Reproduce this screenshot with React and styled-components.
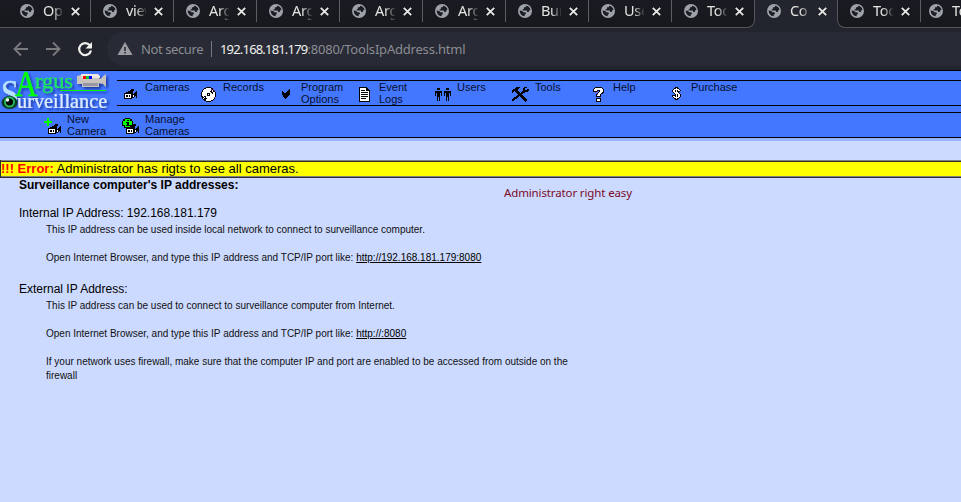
import React from "react";
import styled, { createGlobalStyle } from "styled-components";

const GlobalStyle = createGlobalStyle`
  html, body { margin: 0; background: #ccdaff; }
  body { width: 961px; height: 502px; overflow: hidden; }
`;

const Page = styled.div`
  position: relative;
  width: 961px;
  height: 502px;
  overflow: hidden;
  font-family: "Liberation Sans", Arial, sans-serif;
  color: #000;
`;

/* ---------- browser chrome ---------- */
const TabStrip = styled.div`
  display: flex;
  height: 28px;
  background: #23252e;
`;
const TabGroup = styled.div`
  display: flex;
  box-sizing: border-box;
  flex: ${(p) => (p.$grow ? "1 0 0" : "none")};
  width: ${(p) => (p.$grow ? "auto" : "755px")};
  padding-left: ${(p) => (p.$grow ? 0 : 8)}px;
  overflow: hidden;
  background: linear-gradient(#1a1b22, #17181c);
  border-bottom: 1px solid #54565d;
  border-right: ${(p) => (p.$grow ? "none" : "1px solid #54565d")};
  border-left: ${(p) => (p.$grow ? "1px solid #54565d" : "none")};
  border-radius: ${(p) => (p.$grow ? "0 0 0 8px" : "0 0 8px 0")};
`;
const TabBox = styled.div`
  display: flex;
  align-items: center;
  box-sizing: border-box;
  flex: none;
  width: ${(p) => p.$width || 83}px;
  height: 22px;
  padding-left: ${(p) => p.$inset ?? 12}px;
  border-right: 1px solid ${(p) => (p.$divider ? "#5c5e63" : "transparent")};
`;
const TabTitle = styled.span`
  width: 20px;
  height: 22px;
  margin-left: 9px;
  overflow: hidden;
  white-space: nowrap;
  font: 14.5px/20px "Noto Sans", sans-serif;
  letter-spacing: -0.3px;
  color: #e3e4e0;
  mask-image: linear-gradient(90deg, #000 50%, transparent 105%);
`;
const CloseIcon = styled.svg`
  width: 9px;
  height: 9px;
  margin-left: 8px;
`;
const GlobeSvg = styled.svg`
  width: 14px;
  height: 14px;
  flex: none;
`;
const Toolbar = styled.div`
  display: flex;
  align-items: center;
  height: 42px;
  background: #23252e;
  border-bottom: 1px solid #000;
`;
const NavIcons = styled.svg`
  width: 107px;
  height: 42px;
  flex: none;
`;
const Omnibox = styled.div`
  display: flex;
  align-items: center;
  flex: 1;
  height: 34px;
  padding-left: 10px;
  border-radius: 17px 0 0 17px;
  background: #282a35;
  font: 13px/34px "Noto Sans", sans-serif;
  letter-spacing: -0.2px;
  color: #8b8d93;
  white-space: pre;
`;
const Warn = styled.svg`
  width: 16px;
  height: 16px;
  margin-right: 8px;
`;
const NotSecure = styled.span`
  width: 70px;
  letter-spacing: -0.4px;
`;
const Url = styled.span`
  border-left: 1px solid #777980;
  line-height: 16px;
  padding-left: 8px;
`;
const Host = styled.span`
  color: #f1f2ef;
  letter-spacing: -0.82px;
`;

/* ---------- site header ---------- */
const Header = styled.header`
  height: 67px;
  background: #4477ff;
  border-bottom: 3px solid #99b4ff;
`;
const TopRow = styled.div`
  display: flex;
  height: 41px;
`;
const Logo = styled.svg`
  width: 117px;
  height: 41px;
  flex: none;
`;
const MainMenu = styled.nav`
  display: flex;
  flex: 1;
  box-sizing: border-box;
  height: 26px;
  margin-top: 9px;
  border-top: 1px solid #000;
  border-bottom: 1px solid #000;
`;
const SubMenu = styled.nav`
  display: flex;
  box-sizing: border-box;
  height: 26px;
  padding-left: 39px;
  border-top: 1px solid #000;
  border-bottom: 1px solid #000;
`;
const MenuItem = styled.a`
  display: flex;
  width: 78px;
  flex: none;
`;
const MenuIcon = styled.svg`
  width: 28px;
  height: 24px;
  flex: none;
`;
const MenuLabel = styled.span`
  font-size: 11px;
  line-height: 12px;
  white-space: pre;
  color: #06102e;
`;

/* ---------- body ---------- */
const ErrorBar = styled.div`
  box-sizing: border-box;
  height: 18px;
  margin-top: 19px;
  border-left: 1px solid #303030;
  background: #ff0;
  box-shadow: inset 0 1px #808080, inset 0 2px #2c2c2c, inset 0 -1px #2c2c2c, inset 0 -2px #808080;
  font-size: 13px;
  line-height: 18px;
  white-space: pre;
`;
const ErrorTag = styled.b`
  color: #f00;
`;
const Info = styled.main`
  padding-left: 19px;
  font-size: 12px;
  line-height: 14px;
`;
const Line = styled.div`
  margin-bottom: ${(p) => p.$gap || 0}px;
  font-weight: ${(p) => (p.$bold ? 700 : 400)};
`;
const Detail = styled.p`
  width: 535px;
  margin: 0 0 ${(p) => p.$gap ?? 14}px 27px;
  font-size: 10px;
  line-height: 14px;
  color: #111;
`;
const Link = styled.a`
  text-decoration: underline;
  color: #000;
`;
const Annotation = styled.div`
  position: absolute;
  left: 504px;
  top: 184px;
  font: 11.5px/18px "Noto Sans", sans-serif;
  letter-spacing: -0.13px;
  color: #7d0a28;
  white-space: nowrap;
`;

const Globe = () => (
  <GlobeSvg viewBox="0 0 14 14">
    <circle cx="7" cy="7" r="7" fill="#9da2a8" />
    <path
      d="M8.2 1.700c-.1 1-.7 1.500-1.700 1.500-.7 0-.7.7-.6 1.200.1.6-.7.8-1.300.8v1.300h3.500c.8 0 1 .7 1 1.400h1.200c.6 0 1-.7 1-1.400 0-.6.6-.8 1.200-.7-.2-2-1.800-3.600-4.300-4.100zM1.700 6.500c0 3.200 2.100 5.500 5 5.700v-1.500c1.100-.2 1.300-.9 1.200-1.600-.1-.5-.8-.8-1.400-.8H5.300c-.4-1.100-1.600-1.800-3.600-1.800z"
      fill="#1c1d23"
    />
  </GlobeSvg>
);

const Tab = ({ title, divider, width, inset }) => (
  <TabBox $divider={divider} $width={width} $inset={inset}>
    <Globe />
    <TabTitle>{title}</TabTitle>
    <CloseIcon viewBox="0 0 9 9">
      <path d="M.8.8l7.400 7.400M8.200.8L.8 8.200" stroke="#e8e9e6" strokeWidth="1.800" />
    </CloseIcon>
  </TabBox>
);

/* Bitmap icons: # black, w white, m magenta */
const INK = { "#": "#000", w: "#fff", m: "#a0309a" };
const CAMERA = [
  ".......###...",
  "......####...",
  "....#####...#",
  "..#######..##",
  "#########.###",
  "#wwwwww######",
  "#w##w#w##w###",
  "#w##w#w##w#.#",
  "#wwwwww###..#",
  "########.....",
];
const BITMAPS = {
  camera: { x: 7, y: 8, rows: CAMERA },
  disc: {
    x: 6, y: 6,
    rows: [
      ".....#####.....",
      "...##wwwww##...",
      "..#wwwwwwwm#m..",
      ".#wwwwwwww#w#m.",
      ".#wwwwwww##w##.",
      "#wwwwwwwww##ww#",
      "#wwwww###ww#ww#",
      "#wwwww#w#wwwww#",
      "#wwwww###wwwww#",
      "##w##wwwwwwwww#",
      ".##w#wwwwwwwwm.",
      ".#w###wwwwwww#.",
      "..###wwwwwww#..",
      "...##wwwww##...",
      ".....#####.....",
    ],
  },
  check: {
    x: 9, y: 8,
    rows: [".......#", "......##", "#....###", "##..####", "########", "########", ".######.", ".#####..", "..###...", "...#...."],
  },
  page: {
    x: 8, y: 6,
    rows: [
      "########...", "#wwwwww##..", "#wwwwww###.", "#w####w####", "#wwwwwwwww#",
      "#w#######w#", "#wwwwwwwww#", "#w#######w#", "#wwwwwwwww#", "#w#######w#",
      "#wwwwwwwww#", "#w#####www#", "#wwwwwwwww#", "#wwwwwwwww#", "###########",
    ],
  },
  users: {
    x: 6, y: 7,
    rows: [
      "..###....###....", "..###....###....", "................", "#######..#######", "#######..#######",
      "#.###.#..#.###.#", "#.###.#..#.###.#", "#.###.#..#.###.#", "..###......###..", "..#.#......#.#..",
      "..#.#......#.#..", "..#.#......#.#..", "..#.#......#.#..",
    ].map((r, i) => (i < 2 ? "..###......###.." : r)),
  },
  tools: {
    x: 5, y: 6,
    rows: [
      "....####....###..", "...####....##....", ".#####.....##..##", "######.....######", "##.####...######.",
      "#...####.####....", ".....######......", "......####.......", ".....######......", "....###.####.....",
      "..####...####....", ".####.....####...", "###........####..", "##..........###..", ".............#...",
    ],
  },
  help: {
    x: 8, y: 6,
    rows: [
      "..#######..", ".#wwwwwww#.", "#wwwwwwwww#", "#www###www#", "####m.#www#",
      "..m..#www##", "....#www##.", "...#mww#...", "...#www#...", "...#####...",
      "...........", "...#####...", "...#www#...", "...#www#...", "...#####...",
    ],
  },
  dollar: {
    x: 9, y: 6,
    rows: [
      "...###...", "..##w##..", ".#wwwww#.", "#ww#w#ww#", "#ww#w###.", ".#wwww#..", "..#wwww#.",
      "...#w#ww#", "####w#ww#", "#ww#w#ww#", ".#wwwww#.", "..##w##..", "...###...",
    ],
  },
  newCamera: { x: 9, y: 11, rows: CAMERA },
  manageCamera: { x: 9, y: 11, rows: CAMERA },
};

const Bitmap = ({ name }) => {
  const b = BITMAPS[name];
  return (
    <MenuIcon viewBox="0 0 28 24" shapeRendering="crispEdges">
      {b.rows.flatMap((row, y) =>
        [...row].map((c, x) =>
          INK[c] ? <rect key={`${x}-${y}`} x={b.x + x} y={b.y + y} width="1" height="1" fill={INK[c]} /> : null
        )
      )}
      {name === "newCamera" && <path d="M5 8h8v2H5zM8 5h2v8H8z" fill="#0f0" />}
      {name === "manageCamera" && (
        <>
          <path d="M8 5h5v1h2v2h1v5h-2v2H7v-2H5V8h1V6h2z" fill="#000" />
          <path d="M8 6h5v2h2v4h-2v2H8v-2H6V8h2z" fill="#0f0" />
          <path d="M10 7h2v1h-2zM9 9h3v3h1v1H9v-1h1v-2H9z" fill="#000" />
        </>
      )}
    </MenuIcon>
  );
};

const Item = ({ icon, label }) => (
  <MenuItem>
    <Bitmap name={icon} />
    <MenuLabel>{label}</MenuLabel>
  </MenuItem>
);

const ArgusLogo = () => (
  <Logo viewBox="0 0 117 41">
    <defs>
      <filter id="shade" x="-10%" y="-10%" width="125%" height="130%">
        <feDropShadow dx="2" dy="2" stdDeviation="1.300" floodColor="#0a2888" floodOpacity=".75" />
      </filter>
    </defs>
    <g filter="url(#shade)" fontFamily="Liberation Serif, serif">
      <text transform="translate(1 35) scale(.86 1)" fontSize="37" fill="#b7e2ff" stroke="#b7e2ff" strokeWidth=".5">S</text>
      <text transform="translate(17 37) scale(.94 1.120)" x="0" y="0" fontSize="18.500" fill="#dbeaff" stroke="#dbeaff" strokeWidth=".2" textLength="96" lengthAdjust="spacingAndGlyphs">urveillance</text>
      <text transform="translate(15 25) scale(.86 1)" fontSize="36" fill="#0f0" stroke="#0f0" strokeWidth=".5">A</text>
      <text x="35" y="17" fontSize="21" fill="#1ee45c" stroke="#1ee45c" strokeWidth=".3" textLength="38" lengthAdjust="spacingAndGlyphs">rgus</text>
      <path d="M60 19.500h46" stroke="#0f0" />
      <path d="M77 5l4-1h18v12H82v-3h-5zM99 8l3-1v6l-3-1zM102 6l4-3v13l-4-4z" fill="#c8c4bd" />
      <path d="M81 3h17l2 2v2H82z" fill="#eeeae2" />
      <path d="M83 12h15v3H83z" fill="#9998a2" />
    </g>
    <path d="M83 5h3v3h-3z" fill="#f00" />
    <path d="M86 5h3v3h-3z" fill="#0c3" />
    <path d="M89 5h3v3h-3z" fill="#00f" />
    <ellipse cx="9.500" cy="31.500" rx="8" ry="6.500" fill="#0a3a22" />
    <circle cx="9.500" cy="31" r="5.500" fill="#28b45a" />
    <circle cx="9.500" cy="31" r="3.500" fill="#000" />
    <circle cx="7.500" cy="29" r="1.700" fill="#fff" />
  </Logo>
);

const LEFT_TABS = ["Ope", "view", "Argu", "Argu", "Argu", "Argu", "Burp", "User", "Tool"];
const MENU = [
  ["camera", "Cameras"],
  ["disc", "Records"],
  ["check", "Program\nOptions"],
  ["page", "Event\nLogs"],
  ["users", "Users"],
  ["tools", "Tools"],
  ["help", "Help"],
  ["dollar", "Purchase"],
];

export default function App() {
  return (
    <Page>
      <GlobalStyle />
      <TabStrip>
        <TabGroup>
          {LEFT_TABS.map((t, i) => (
            <Tab key={i} title={t} divider={i < 8} />
          ))}
        </TabGroup>
        <Tab title="Co" width={82} />
        <TabGroup $grow>
          <Tab title="Tool" divider />
          <Tab title="Tool" inset={8} />
        </TabGroup>
      </TabStrip>
      <Toolbar>
        <NavIcons viewBox="0 0 107 42" fill="none" strokeWidth="1.800">
          <path d="M28 21H15M21 14.500L14.500 21l6.500 6.500M46 21h13M53 14.500l6.500 6.500-6.500 6.500" stroke="#797a7e" />
          <path d="M89.800 17.200A6 6 0 1 0 91 22.500" stroke="#f1f2ee" strokeWidth="2.200" />
          <path d="M92 14v6.500h-6.500z" fill="#f1f2ee" />
        </NavIcons>
        <Omnibox>
          <Warn viewBox="0 0 16 16">
            <path d="M8 1l7.500 13H.5z" fill="#9b9da3" />
            <path d="M7.200 6h1.600v4H7.200zM7.200 11h1.600v1.600H7.200z" fill="#282a35" />
          </Warn>
          <NotSecure>Not secure</NotSecure>
          <Url><Host>192.168.181.179</Host>:8080/ToolsIpAddress.html</Url>
        </Omnibox>
      </Toolbar>
      <Header>
        <TopRow>
          <ArgusLogo />
          <MainMenu>
            {MENU.map(([icon, label]) => <Item key={label} icon={icon} label={label} />)}
          </MainMenu>
        </TopRow>
        <SubMenu>
          <Item icon="newCamera" label={"New\nCamera"} />
          <Item icon="manageCamera" label={"Manage\nCameras"} />
        </SubMenu>
      </Header>
      <ErrorBar><ErrorTag>!!! Error:</ErrorTag> Administrator has rigts to see all cameras.</ErrorBar>
      <Info>
        <Line $bold $gap={14}>Surveillance computer's IP addresses:</Line>
        <Line $gap={3}>Internal IP Address: 192.168.181.179</Line>
        <Detail>This IP address can be used inside local network to connect to surveillance computer.</Detail>
        <Detail $gap={17}>
          Open Internet Browser, and type this IP address and TCP/IP port like: <Link>http://192.168.181.179:8080</Link>
        </Detail>
        <Line $gap={3}>External IP Address:</Line>
        <Detail>This IP address can be used to connect to surveillance computer from Internet.</Detail>
        <Detail>
          Open Internet Browser, and type this IP address and TCP/IP port like: <Link>http://:8080</Link>
        </Detail>
        <Detail $gap={0}>
          If your network uses firewall, make sure that the computer IP and port are enabled to be accessed from outside on the firewall
        </Detail>
      </Info>
      <Annotation>Administrator right easy</Annotation>
    </Page>
  );
}
